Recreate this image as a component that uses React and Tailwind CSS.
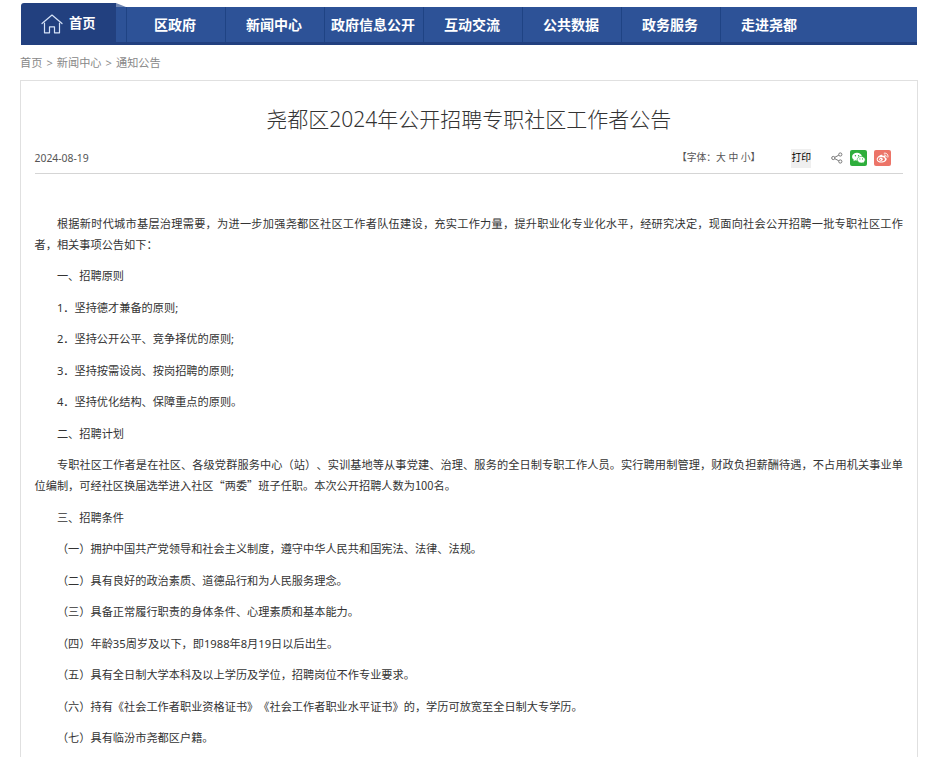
import React from "react";

const navItems = [
  "区政府",
  "新闻中心",
  "政府信息公开",
  "互动交流",
  "公共数据",
  "政务服务",
  "走进尧都",
];

const crumbs = ["首页", "新闻中心", "通知公告"];

const paragraphs = [
  "根据新时代城市基层治理需要，为进一步加强尧都区社区工作者队伍建设，充实工作力量，提升职业化专业化水平，经研究决定，现面向社会公开招聘一批专职社区工作者，相关事项公告如下：",
  "一、招聘原则",
  "1．坚持德才兼备的原则;",
  "2．坚持公开公平、竞争择优的原则;",
  "3．坚持按需设岗、按岗招聘的原则;",
  "4．坚持优化结构、保障重点的原则。",
  "二、招聘计划",
  "专职社区工作者是在社区、各级党群服务中心（站）、实训基地等从事党建、治理、服务的全日制专职工作人员。实行聘用制管理，财政负担薪酬待遇，不占用机关事业单位编制，可经社区换届选举进入社区“两委”班子任职。本次公开招聘人数为100名。",
  "三、招聘条件",
  "（一）拥护中国共产党领导和社会主义制度，遵守中华人民共和国宪法、法律、法规。",
  "（二）具有良好的政治素质、道德品行和为人民服务理念。",
  "（三）具备正常履行职责的身体条件、心理素质和基本能力。",
  "（四）年龄35周岁及以下，即1988年8月19日以后出生。",
  "（五）具有全日制大学本科及以上学历及学位，招聘岗位不作专业要求。",
  "（六）持有《社会工作者职业资格证书》《社会工作者职业水平证书》的，学历可放宽至全日制大专学历。",
  "（七）具有临汾市尧都区户籍。",
];

const HomeIcon = () => (
  <svg width="22" height="20" viewBox="0 0 22 20" fill="none" stroke="#d5e2f7" strokeWidth="1.2" strokeLinejoin="round" strokeLinecap="round">
    <path d="M1 9.500 11 1l10 8.500" />
    <path d="M3.500 9v9.800h5v-6h5v6h5V9" />
  </svg>
);

const ShareIcon = () => (
  <svg width="12" height="12" viewBox="0 0 12 12" fill="none" stroke="#777" strokeWidth="1">
    <circle cx="2.300" cy="6" r="1.600" />
    <circle cx="9.300" cy="2.500" r="1.600" />
    <circle cx="9.300" cy="9.500" r="1.600" />
    <path d="M3.800 5.300 7.800 3.200M3.800 6.700l4 2.100" />
  </svg>
);

const WechatIcon = () => (
  <svg width="17" height="16" viewBox="0 0 17 16">
    <rect width="17" height="16" rx="2" fill="#2eae3b" />
    <path d="M7 2.800c-2.800 0-4.900 1.700-4.900 3.900 0 1.200.7 2.300 1.800 3l-.5 1.500 1.800-.9c.6.2 1.200.3 1.800.3 2.700 0 4.900-1.700 4.900-3.900S9.700 2.800 7 2.800z" fill="#fff" />
    <path d="M11.200 6.400c-2.200 0-4 1.500-4 3.300s1.800 3.300 4 3.300c.5 0 1-.1 1.500-.2l1.400.8-.4-1.300c.9-.6 1.500-1.500 1.500-2.600 0-1.800-1.800-3.300-4-3.300z" fill="#fff" stroke="#2eae3b" strokeWidth=".6" />
    <g fill="#2eae3b">
      <circle cx="5.400" cy="5.700" r=".7" />
      <circle cx="8.600" cy="5.700" r=".7" />
      <circle cx="9.900" cy="8.900" r=".55" />
      <circle cx="12.500" cy="8.900" r=".55" />
    </g>
  </svg>
);

const WeiboIcon = () => (
  <svg width="17" height="16" viewBox="0 0 17 16">
    <rect width="17" height="16" rx="2" fill="#ec7468" />
    <path d="M7.200 4.800c.9-.3 1.600.2 1.300 1.300 1.500-.6 2.900-.3 2.500 1.100 1 .3 1.700.9 1.700 1.800 0 1.900-2.500 3.600-5.300 3.600-2.600 0-4.700-1.300-4.700-3.200 0-1.800 2.600-4 4.500-4.600z" fill="#fff" />
    <ellipse cx="7.300" cy="9.200" rx="3.500" ry="2.200" fill="#ec7468" />
    <circle cx="7" cy="9.300" r="1.700" fill="#fff" />
    <circle cx="6.600" cy="9.600" r=".6" fill="#ec7468" />
    <path d="M10.200 3.200c2.400-.5 4.300 1.300 3.700 3.900M10.500 5c1.100-.2 1.900.6 1.600 1.700" fill="none" stroke="#fff" strokeWidth="1" strokeLinecap="round" />
  </svg>
);

const App = () => {
  return (
    <div className="h-[757px] overflow-hidden bg-white px-[21px] pt-[3px] font-['Noto_Sans','Noto_Sans_CJK_SC',sans-serif] text-[#333] [text-spacing-trim:space-all]">
      <nav className="flex h-[42px] items-end text-[14px] font-bold text-white">
        <a className="flex h-[42px] w-[95px] items-center gap-[6px] rounded-tl-[3px] bg-[#22407f] pl-[20px]">
          <HomeIcon />
          <span className="text-[13.3px]">首页</span>
        </a>
        <svg width="10" height="42" viewBox="0 0 10 42">
          <path d="M0 4h10v38H0z" fill="#2d5297" />
          <path d="M0 0 10 4H0z" fill="#7187b2" />
          <path d="M0 39H10V42H0z" fill="#22407f" />
        </svg>
        <div className="flex h-[38px] flex-1 border-b-[3px] border-[#22407f] bg-[#2d5297]">
          {navItems.map((item) => (
            <a
              key={item}
              className="flex w-[99px] items-center justify-center border-l border-[#1f4384] pr-[2px] whitespace-nowrap"
            >
              {item}
            </a>
          ))}
        </div>
      </nav>

      <div className="-ml-px flex h-[35px] items-center gap-[4px] pt-[2px] text-[11.2px] text-[#888]">
        {crumbs.map((item, i) => (
          <React.Fragment key={item}>
            {i > 0 && <span>&gt;</span>}
            <a>{item}</a>
          </React.Fragment>
        ))}
      </div>

      <div className="-mx-px h-[800px] border border-[#e0e0e0] pr-[14px] pl-[13.5px]">
        <h1 className="mt-[22px] text-center text-[21px] leading-[32px] font-light">
          尧都区2024年公开招聘专职社区工作者公告
        </h1>
        <div className="flex h-[39px] items-center border-b border-[#d5d5d5] pt-[8px] text-[9.8px] text-[#555]">
          <span className="pt-px text-[10.4px]">2024-08-19</span>
          <span className="ml-auto pt-px whitespace-pre">【字体：大 中 小】</span>
          <button className="ml-[31px] h-[19px] bg-[#efefef] pt-px text-black">打印</button>
          <span className="ml-[20px]">
            <ShareIcon />
          </span>
          <span className="ml-[7px]">
            <WechatIcon />
          </span>
          <span className="mr-[12px] ml-[7px]">
            <WeiboIcon />
          </span>
        </div>
        <div className="mt-[38.8px] text-justify text-[11.2px] leading-[21px]">
          {paragraphs.map((text, i) => (
            // curly quotes are only full width in the CJK font
            <p
              key={i}
              className={
                text.includes("“")
                  ? "mb-[10.5px] indent-[2em] font-['Noto_Sans_CJK_SC',sans-serif]"
                  : "mb-[10.5px] indent-[2em]"
              }
            >
              {text}
            </p>
          ))}
        </div>
      </div>
    </div>
  );
};

export default App;
